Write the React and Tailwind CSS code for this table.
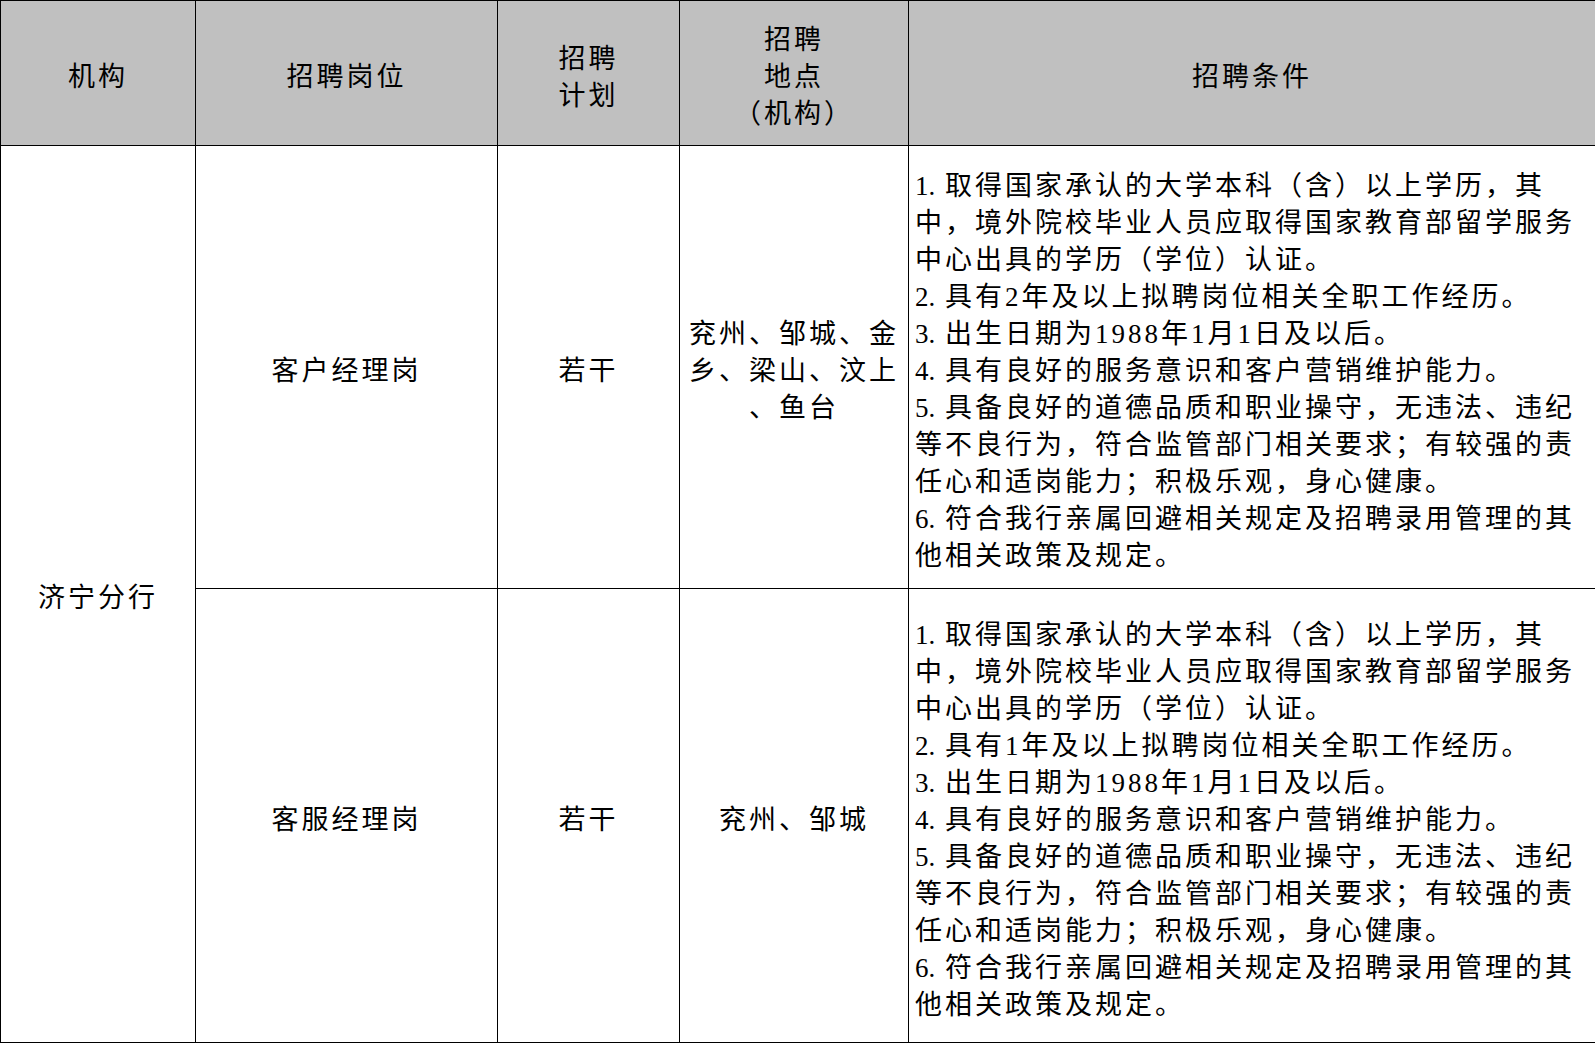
import React from "react";

const FONT = { fontFamily: '"Liberation Serif", "Noto Sans CJK SC", serif' };

const cond = (n) => [
  "1. 取得国家承认的大学本科（含）以上学历，其",
  "中，境外院校毕业人员应取得国家教育部留学服务",
  "中心出具的学历（学位）认证。",
  `2. 具有${n}年及以上拟聘岗位相关全职工作经历。`,
  "3. 出生日期为1988年1月1日及以后。",
  "4. 具有良好的服务意识和客户营销维护能力。",
  "5. 具备良好的道德品质和职业操守，无违法、违纪",
  "等不良行为，符合监管部门相关要求；有较强的责",
  "任心和适岗能力；积极乐观，身心健康。",
  "6. 符合我行亲属回避相关规定及招聘录用管理的其",
  "他相关政策及规定。",
];

function Line({ text }) {
  const m = text.match(/^(\d\.)\s(.*)$/);
  if (m) {
    return (
      <div className="whitespace-nowrap leading-[37px]">
        <span className="tracking-normal">{m[1]}</span> {m[2]}
      </div>
    );
  }
  return <div className="whitespace-nowrap leading-[37px]">{text}</div>;
}

function Lines({ lines, className = "" }) {
  return (
    <div className={className}>
      {lines.map((l, i) => (
        <Line key={i} text={l} />
      ))}
    </div>
  );
}

const cellC = "border border-black text-center align-middle p-0 pt-[9px]";
const cellL = "border border-black text-left align-middle p-0 pt-[9px] pl-[6px]";

export default function App() {
  return (
    <div
      className="w-[1595px] h-[1044px] bg-white text-black text-[27px] tracking-[3px]"
      style={FONT}
    >
      <table className="table-fixed border-collapse w-[1595px]">
        <colgroup>
          <col className="w-[195px]" />
          <col className="w-[302px]" />
          <col className="w-[182px]" />
          <col className="w-[229px]" />
          <col className="w-[687px]" />
        </colgroup>
        <thead>
          <tr className="h-[145px] bg-[#c0c0c0]">
            <th className={cellC + " font-normal"}>
              <Lines lines={["机构"]} />
            </th>
            <th className={cellC + " font-normal"}>
              <Lines lines={["招聘岗位"]} />
            </th>
            <th className={cellC + " font-normal"}>
              <Lines lines={["招聘", "计划"]} />
            </th>
            <th className={cellC + " font-normal"}>
              <Lines lines={["招聘", "地点", "（机构）"]} />
            </th>
            <th className={cellC + " font-normal"}>
              <Lines lines={["招聘条件"]} />
            </th>
          </tr>
        </thead>
        <tbody>
          <tr className="h-[443px]">
            <td rowSpan={2} className={cellC}>
              <Lines lines={["济宁分行"]} />
            </td>
            <td className={cellC}>
              <Lines lines={["客户经理岗"]} />
            </td>
            <td className={cellC}>
              <Lines lines={["若干"]} />
            </td>
            <td className={cellC}>
              <Lines lines={["兖州、邹城、金", "乡、梁山、汶上", "、鱼台"]} />
            </td>
            <td className={cellL}>
              <Lines lines={cond(2)} />
            </td>
          </tr>
          <tr className="h-[454px]">
            <td className={cellC}>
              <Lines lines={["客服经理岗"]} />
            </td>
            <td className={cellC}>
              <Lines lines={["若干"]} />
            </td>
            <td className={cellC}>
              <Lines lines={["兖州、邹城"]} />
            </td>
            <td className={cellL}>
              <Lines lines={cond(1)} />
            </td>
          </tr>
        </tbody>
      </table>
    </div>
  );
}
